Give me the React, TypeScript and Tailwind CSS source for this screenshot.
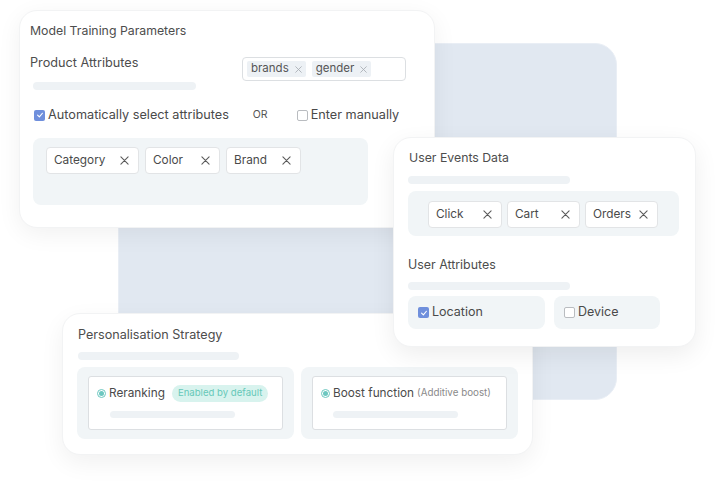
import React from "react";

const X = ({ size = 9, color = "#555" }: { size?: number; color?: string }) => (
  <svg width={size} height={size} viewBox="0 0 10 10" className="shrink-0">
    <path d="M1 1L9 9M9 1L1 9" stroke={color} strokeWidth="1.2" strokeLinecap="round" />
  </svg>
);

const Check = ({ checked }: { checked: boolean }) =>
  checked ? (
    <span className="w-[11px] h-[11px] rounded-[2px] bg-[#6f8fdc] flex items-center justify-center shrink-0">
      <svg width="8" height="8" viewBox="0 0 10 10">
        <path d="M2 5.2L4.2 7.3L8 2.8" stroke="#fff" strokeWidth="1.4" fill="none" strokeLinecap="round" strokeLinejoin="round" />
      </svg>
    </span>
  ) : (
    <span className="block w-[11px] h-[11px] rounded-[2px] border border-[#b9bcc0] bg-white shrink-0" />
  );

const Radio = () => (
  <span className="w-[9px] h-[9px] rounded-full border border-[#6cc7c0] flex items-center justify-center shrink-0">
    <span className="w-[5px] h-[5px] rounded-full bg-[#6cc7c0]" />
  </span>
);

const Bar = ({ w, h = 8 }: { w: number; h?: number }) => (
  <div className="rounded-full bg-[#eef2f5]" style={{ width: w, height: h }} />
);

const Tag = ({ label, w }: { label: string; w: number }) => (
  <div
    className="h-[27px] bg-white border border-[#e2e4e6] rounded-[4px] flex items-center justify-between pl-[7px] pr-[9px] text-[11.8px] text-[#4a4a4a]"
    style={{ width: w }}
  >
    <span>{label}</span>
    <X size={9} color="#5a5a5a" />
  </div>
);

const MiniTag = ({ label }: { label: string }) => (
  <div className="h-[16px] bg-[#edf1f5] rounded-[2px] flex items-center gap-[6px] px-[4px] text-[11.5px] text-[#555]">
    <span>{label}</span>
    <X size={7} color="#a7acb1" />
  </div>
);

export default function App() {
  return (
    <div
      className="relative w-[715px] h-[483px] bg-white overflow-hidden text-[#4a4a4a]"
      style={{ fontFamily: "Inter, 'Noto Sans', sans-serif" }}
    >
      {/* background panel */}
      <div className="absolute left-[118px] top-[43px] w-[499px] h-[357px] bg-[#e1e8f1] rounded-r-[22px] border border-[#e9eef5]" />

      {/* Card 1 */}
      <div className="absolute left-[19px] top-[10px] w-[416px] h-[218px] bg-white rounded-[18px] border border-[#f2f3f4] shadow-[0_6px_24px_rgba(0,0,0,0.06)] pt-[12px] pl-[10px]">
        <div className="text-[12.3px] leading-[16px] text-[#4d4d4d]">Model Training Parameters</div>
        <div className="flex items-start mt-[16px]">
          <div className="w-[212px] flex flex-col">
            <div className="text-[12.7px] leading-[16px] text-[#4d4d4d]">Product Attributes</div>
            <div className="mt-[11px] ml-[3px]">
              <Bar w={163} />
            </div>
          </div>
          <div className="mt-[2px] w-[164px] h-[24px] border border-[#dcdfe2] rounded-[4px] flex items-center gap-[6px] pl-[4px]">
            <MiniTag label="brands" />
            <MiniTag label="gender" />
          </div>
        </div>
        <div className="flex items-center mt-[17px] ml-[4px] h-[16px] text-[12.7px]">
          <Check checked />
          <span className="ml-[3px]">Automatically select attributes</span>
          <span className="ml-[24px] text-[10.5px] text-[#555]">OR</span>
          <span className="ml-[29px] flex">
            <Check checked={false} />
          </span>
          <span className="ml-[3px]">Enter manually</span>
        </div>
        <div className="mt-[15px] ml-[3px] w-[335px] h-[67px] rounded-[8px] bg-[#f1f5f7] pt-[9px] pl-[13px] flex items-start gap-[6px]">
          <Tag label="Category" w={93} />
          <Tag label="Color" w={75} />
          <Tag label="Brand" w={75} />
        </div>
      </div>

      {/* Card 3 */}
      <div className="absolute left-[62px] top-[313px] w-[471px] h-[142px] bg-white rounded-[18px] border border-[#f2f3f4] shadow-[0_8px_24px_rgba(0,0,0,0.06)] pt-[13px] pl-[14px]">
        <div className="ml-[1px] text-[12.6px] leading-[16px] text-[#4d4d4d]">Personalisation Strategy</div>
        <div className="mt-[9px] ml-[1px]">
          <Bar w={161} />
        </div>
        <div className="mt-[7px] flex gap-[7px]">
          <div className="w-[217px] h-[72px] rounded-[8px] bg-[#f1f5f7] pt-[9px] pl-[11px]">
            <div className="w-[195px] h-[54px] bg-white border border-[#dcdfe2] rounded-[3px] pt-[8px] pl-[8px]">
              <div className="flex items-center h-[17px]">
                <Radio />
                <span className="ml-[3px] text-[11.8px]">Reranking</span>
                <span className="ml-[7px] h-[17px] px-[6px] rounded-full bg-[#d8f3ee] text-[#66c8b8] text-[9.6px] flex items-center">
                  Enabled by default
                </span>
              </div>
              <div className="mt-[9px] ml-[13px]">
                <Bar w={125} h={7} />
              </div>
            </div>
          </div>
          <div className="w-[217px] h-[72px] rounded-[8px] bg-[#f1f5f7] pt-[9px] pl-[11px]">
            <div className="w-[195px] h-[54px] bg-white border border-[#dcdfe2] rounded-[3px] pt-[8px] pl-[8px]">
              <div className="flex items-center h-[17px]">
                <Radio />
                <span className="ml-[3px] text-[11.8px]">Boost function</span>
                <span className="ml-[3px] text-[9.8px] text-[#8a8a8a]">(Additive boost)</span>
              </div>
              <div className="mt-[9px] ml-[12px]">
                <Bar w={125} h={7} />
              </div>
            </div>
          </div>
        </div>
      </div>

      {/* Card 2 */}
      <div className="absolute left-[393px] top-[137px] w-[303px] h-[210px] bg-white rounded-[18px] border border-[#f2f3f4] shadow-[0_8px_24px_rgba(0,0,0,0.07)] pt-[12px] pl-[14px]">
        <div className="ml-[1px] text-[12.3px] leading-[16px] text-[#4d4d4d]">User Events Data</div>
        <div className="mt-[10px]">
          <Bar w={162} />
        </div>
        <div className="mt-[7px] w-[271px] h-[45px] rounded-[8px] bg-[#f1f5f7] pt-[10px] pl-[20px] flex items-start gap-[5px]">
          <Tag label="Click" w={74} />
          <Tag label="Cart" w={73} />
          <Tag label="Orders" w={73} />
        </div>
        <div className="mt-[21px] text-[12.4px] leading-[16px] text-[#4d4d4d]">User Attributes</div>
        <div className="mt-[9px]">
          <Bar w={162} />
        </div>
        <div className="mt-[6px] flex gap-[9px]">
          <div className="w-[137px] h-[33px] rounded-[8px] bg-[#f1f5f7] flex items-center pl-[10px] text-[12.5px]">
            <Check checked />
            <span className="ml-[3px]">Location</span>
          </div>
          <div className="w-[106px] h-[33px] rounded-[8px] bg-[#f1f5f7] flex items-center pl-[10px] text-[12.5px]">
            <Check checked={false} />
            <span className="ml-[3px]">Device</span>
          </div>
        </div>
      </div>
    </div>
  );
}
